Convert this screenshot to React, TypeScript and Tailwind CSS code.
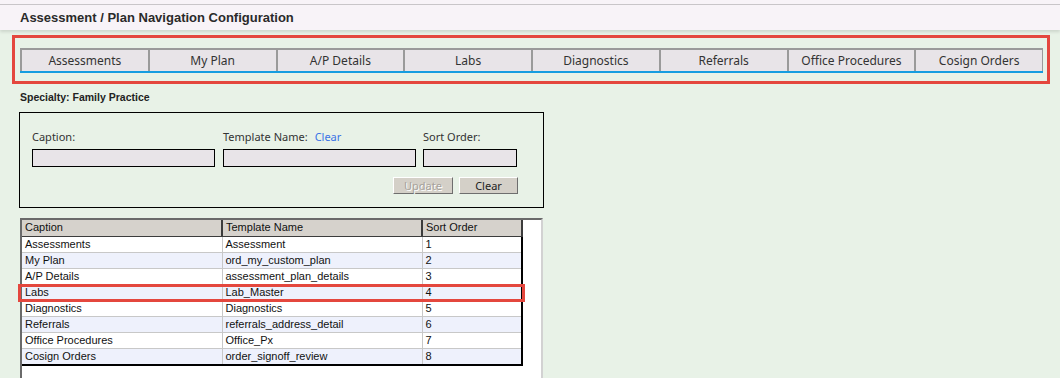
const tabs = [
  "Assessments",
  "My Plan",
  "A/P Details",
  "Labs",
  "Diagnostics",
  "Referrals",
  "Office Procedures",
  "Cosign Orders",
];

const rows = [
  ["Assessments", "Assessment", "1"],
  ["My Plan", "ord_my_custom_plan", "2"],
  ["A/P Details", "assessment_plan_details", "3"],
  ["Labs", "Lab_Master", "4"],
  ["Diagnostics", "Diagnostics", "5"],
  ["Referrals", "referrals_address_detail", "6"],
  ["Office Procedures", "Office_Px", "7"],
  ["Cosign Orders", "order_signoff_review", "8"],
];

export default function App() {
  return (
    <div className="w-[1060px] h-[378px] overflow-hidden bg-[#e8f2e7] font-['Liberation_Sans',Arial,sans-serif] text-[#111]">
      <Header />
      <TabBar />
      <div className="ml-[20px] mt-[6px] h-[14px] leading-[14px] text-[10.5px] font-bold text-[#222]">
        Specialty: Family Practice
      </div>
      <EditForm />
      <Grid />
    </div>
  );
}

function Header() {
  return (
    <div className="relative z-10 shadow-[0_2px_3px_rgba(0,0,0,0.12)]">
      <div className="h-[5px] bg-[#f8f3f8] border-b border-[#c9c5c9]" />
      <div className="h-[25px] bg-[#f8f3f8] pl-[20px] flex items-center text-[13px] font-bold text-[#2a2a2a]">
        Assessment / Plan Navigation Configuration
      </div>
    </div>
  );
}

function TabBar() {
  return (
    <div className="ml-[12px] mt-[5px] w-[1038px] h-[49px] border-[3px] border-[#e4473e] pl-[5px] pt-[10px]">
      <div className="flex w-[1023px] h-[25px] border-t-2 border-[#9a9a9a] border-b-2 border-b-[#169de0]">
        {tabs.map((t, i) => (
          <div
            key={t}
            className={`flex-1 flex items-center justify-center bg-[#e8e4e8] border-[#9a9a9a] border-r-[1.5px] ${
              i === 0 ? "border-l-2" : "border-l-[1.5px]"
            } ${i === tabs.length - 1 ? "border-r-2" : ""} font-['Noto_Sans',sans-serif] text-[12px] text-[#333]`}
          >
            {t}
          </div>
        ))}
      </div>
    </div>
  );
}

function EditForm() {
  return (
    <div className="ml-[19px] mt-[8px] w-[525px] h-[96px] border border-black pl-[12px] pt-[17px] font-['Noto_Sans',sans-serif] text-[11px] text-[#333]">
      <div className="flex">
        <div className="w-[183px]">
          <div className="h-[14px] leading-[14px]">Caption:</div>
          <input className="mt-[5px] w-[183px] h-[18px] bg-[#e8e4e8] border border-black outline-none" />
        </div>
        <div className="ml-[8px] w-[193px]">
          <div className="h-[14px] leading-[14px]">
            Template Name:
            <span className="ml-[7px] text-[#3a73e6]">Clear</span>
          </div>
          <input className="mt-[5px] w-[193px] h-[18px] bg-[#e8e4e8] border border-black outline-none" />
        </div>
        <div className="ml-[7px] w-[94px]">
          <div className="h-[14px] leading-[14px]">Sort Order:</div>
          <input className="mt-[5px] w-[94px] h-[18px] bg-[#e8e4e8] border border-black outline-none" />
        </div>
      </div>
      <div className="mt-[10px] flex justify-end pr-[25px] gap-[6px]">
        <button className="w-[60px] h-[17px] bg-[#d4d0c8] border border-t-white border-l-white border-r-[#6e6e6e] border-b-[#6e6e6e] text-[11px] leading-none text-[#a6a29b] [text-shadow:1px_1px_0_#fff]">
          Update
        </button>
        <button className="w-[59px] h-[17px] bg-[#d4d0c8] border border-t-white border-l-white border-r-[#6e6e6e] border-b-[#6e6e6e] text-[11px] leading-none text-[#222]">
          Clear
        </button>
      </div>
    </div>
  );
}

function Grid() {
  return (
    <div className="relative ml-[20px] mt-[10px] w-[523px] h-[170px] bg-white border-t-2 border-l-2 border-[#6a6a6a] border-r-2 border-r-[#d2d2d2]">
      <table className="w-[500px] border-collapse table-fixed text-[11px] leading-[15px] text-[#111]">
        <colgroup>
          <col className="w-[200px]" />
          <col className="w-[200px]" />
          <col className="w-[100px]" />
        </colgroup>
        <thead>
          <tr className="bg-[#d6d2cc] h-[16px]">
            {["Caption", "Template Name", "Sort Order"].map((h) => (
              <th
                key={h}
                className="text-left font-normal pl-[3px] border-r-2 border-b border-[#3c3c3c] p-0"
              >
                {h}
              </th>
            ))}
          </tr>
        </thead>
        <tbody className="border-r-2 border-b-2 border-black">
          {rows.map((r, i) => (
            <tr key={r[0]} className={`h-[16px] ${i % 2 === 1 ? "bg-[#eef1fc]" : "bg-white"}`}>
              {r.map((c, j) => (
                <td
                  key={j}
                  className={`pl-[3px] p-0 border-b border-[#c8c8c8] ${j < 2 ? "border-r" : "border-r-2 border-r-black"} ${
                    i === rows.length - 1 ? "border-b-2 border-b-black" : ""
                  }`}
                >
                  {c}
                </td>
              ))}
            </tr>
          ))}
        </tbody>
      </table>
      <div className="absolute left-[-4px] top-[64px] w-[507px] h-[18px] border-[3px] border-[#e4473e]" />
    </div>
  );
}
